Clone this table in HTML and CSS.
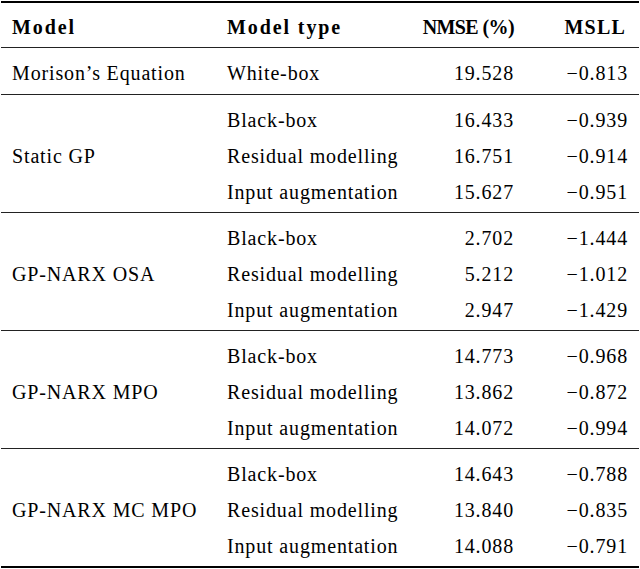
FILE: index.html
```html
<!DOCTYPE html>
<html lang="en">
<head>
<meta charset="utf-8">
<title>Model comparison</title>
<link rel="stylesheet" href="styles.css">
</head>
<body>
<table class="results">
  <colgroup>
    <col class="c-model">
    <col class="c-type">
    <col class="c-nmse">
    <col class="c-msll">
  </colgroup>
  <thead>
    <tr>
      <th class="l first">Model</th>
      <th class="l type">Model type</th>
      <th class="r nmse">NMSE (%)</th>
      <th class="r msll">MSLL</th>
    </tr>
  </thead>
  <tbody class="single">
    <tr>
      <td class="l first">Morison’s Equation</td>
      <td class="l type">White-box</td>
      <td class="r nmse">19.528</td>
      <td class="r msll">−0.813</td>
    </tr>
  </tbody>
  <tbody class="group">
    <tr class="top">
      <td class="l first name" rowspan="3">Static GP</td>
      <td class="l type">Black-box</td>
      <td class="r nmse">16.433</td>
      <td class="r msll">−0.939</td>
    </tr>
    <tr>
      <td class="l type">Residual modelling</td>
      <td class="r nmse">16.751</td>
      <td class="r msll">−0.914</td>
    </tr>
    <tr class="bottom">
      <td class="l type">Input augmentation</td>
      <td class="r nmse">15.627</td>
      <td class="r msll">−0.951</td>
    </tr>
  </tbody>
  <tbody class="group">
    <tr class="top">
      <td class="l first name" rowspan="3">GP-NARX OSA</td>
      <td class="l type">Black-box</td>
      <td class="r nmse">2.702</td>
      <td class="r msll">−1.444</td>
    </tr>
    <tr>
      <td class="l type">Residual modelling</td>
      <td class="r nmse">5.212</td>
      <td class="r msll">−1.012</td>
    </tr>
    <tr class="bottom">
      <td class="l type">Input augmentation</td>
      <td class="r nmse">2.947</td>
      <td class="r msll">−1.429</td>
    </tr>
  </tbody>
  <tbody class="group">
    <tr class="top">
      <td class="l first name" rowspan="3">GP-NARX MPO</td>
      <td class="l type">Black-box</td>
      <td class="r nmse">14.773</td>
      <td class="r msll">−0.968</td>
    </tr>
    <tr>
      <td class="l type">Residual modelling</td>
      <td class="r nmse">13.862</td>
      <td class="r msll">−0.872</td>
    </tr>
    <tr class="bottom">
      <td class="l type">Input augmentation</td>
      <td class="r nmse">14.072</td>
      <td class="r msll">−0.994</td>
    </tr>
  </tbody>
  <tbody class="group last">
    <tr class="top">
      <td class="l first name" rowspan="3">GP-NARX MC MPO</td>
      <td class="l type">Black-box</td>
      <td class="r nmse">14.643</td>
      <td class="r msll">−0.788</td>
    </tr>
    <tr>
      <td class="l type">Residual modelling</td>
      <td class="r nmse">13.840</td>
      <td class="r msll">−0.835</td>
    </tr>
    <tr class="bottom">
      <td class="l type">Input augmentation</td>
      <td class="r nmse">14.088</td>
      <td class="r msll">−0.791</td>
    </tr>
  </tbody>
</table>
</body>
</html>
```
FILE: styles.css
```css
html, body {
  margin: 0;
  padding: 0;
  background: #ffffff;
}

body {
  font-family: "Liberation Serif", "Times New Roman", serif;
  font-size: 20px;
  color: #000;
}

.results {
  margin: 1px 0 0 1px;
  width: 638px;
  border-collapse: collapse;
  border-spacing: 0;
  table-layout: fixed;
}

.c-model { width: 214px; }
.c-type { width: 198px; }
.c-nmse { width: 113px; }
.c-msll { width: 113px; }

th, td {
  padding: 0;
  line-height: 36px;
  height: 36px;
  white-space: nowrap;
  letter-spacing: 0.85px;
  vertical-align: middle;
}

th {
  font-weight: bold;
  letter-spacing: 1.9px;
}

th.nmse {
  letter-spacing: -0.6px;
}

th.msll {
  letter-spacing: 1.2px;
}

.l { text-align: left; }
.r { text-align: right; }

.first { padding-left: 11px; }
.type { padding-left: 12px; }
.nmse { padding-right: 12px; }
.msll { padding-right: 11px; }

th.msll { padding-right: 13px; }

thead tr {
  border-top: 2px solid #000;
  border-bottom: 1px solid #222;
}

thead th {
  padding-top: 6px;
  padding-bottom: 2px;
}

.single td {
  padding-top: 7px;
  padding-bottom: 3px;
}

.group {
  border-top: 1px solid #222;
}

.single {
  border-bottom: 1px solid #222;
}

.group .top td {
  padding-top: 7px;
}

.group .bottom td {
  padding-bottom: 2px;
}

.group td.name {
  padding-top: 5px;
  padding-bottom: 0;
}

.group.last {
  border-bottom: 2px solid #000;
}
```
